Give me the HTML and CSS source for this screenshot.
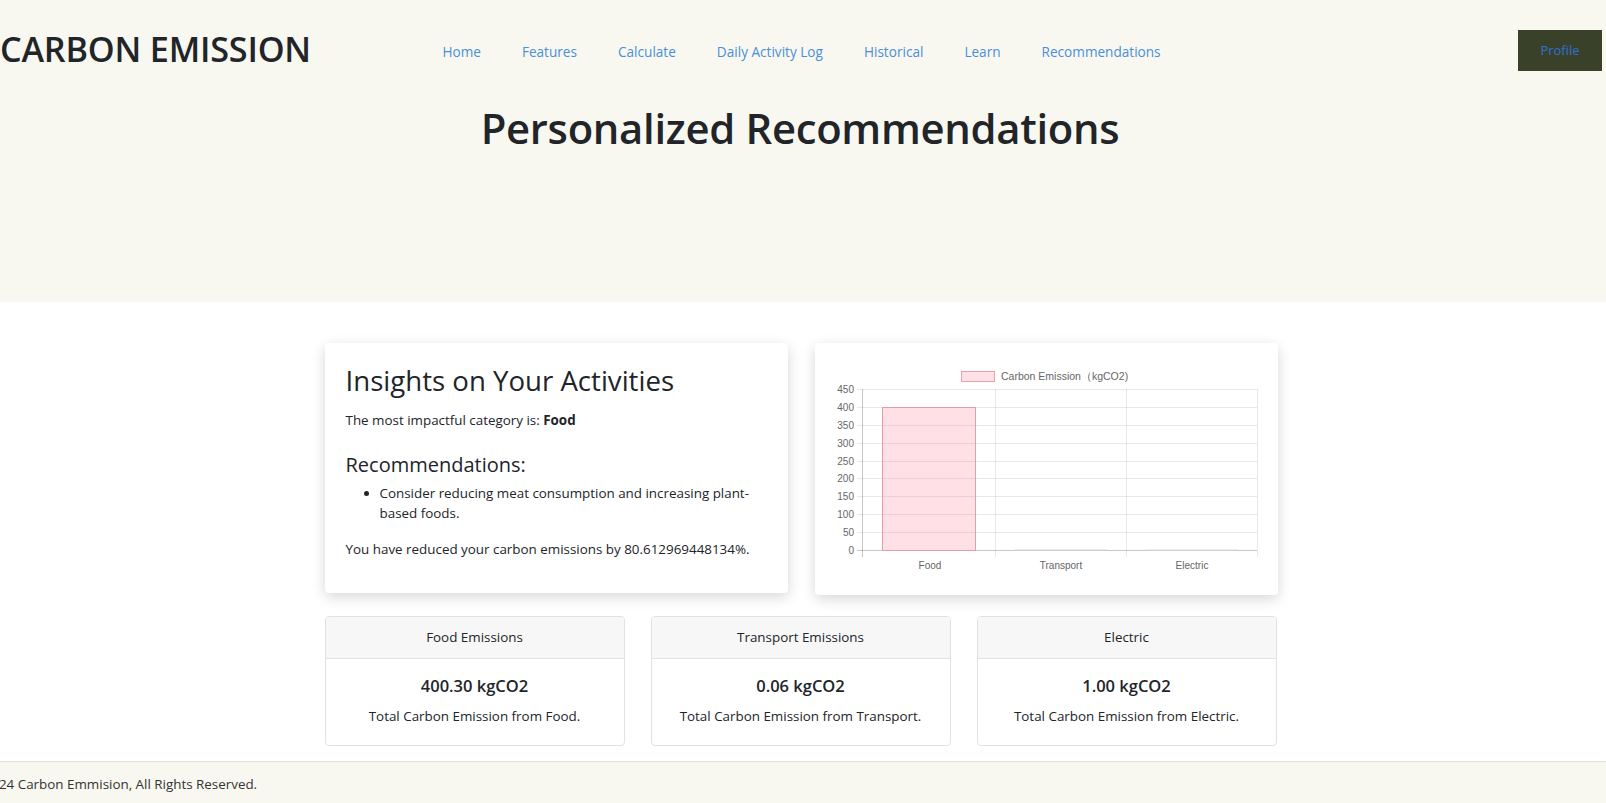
FILE: index.html
```html
<!DOCTYPE html>
<html lang="en">
<head>
    <meta charset="UTF-8">
    <meta name="viewport" content="width=device-width, initial-scale=1.0">
    <title>Recommendations</title>
    <link rel="stylesheet" href="styles.css">
</head>
<body>
    <!-- top bar + page title -->
    <header class="site-header">
        <nav class="navbar">
            <a class="brand" href="#">CARBON EMISSION</a>
            <ul class="nav-links">
                <li><a href="#">Home</a></li>
                <li><a href="#">Features</a></li>
                <li><a href="#">Calculate</a></li>
                <li><a href="#">Daily Activity Log</a></li>
                <li><a href="#">Historical</a></li>
                <li><a href="#">Learn</a></li>
                <li><a href="#">Recommendations</a></li>
            </ul>
            <a class="profile-btn" href="#">Profile</a>
        </nav>
        <div class="hero">
            <h1>Personalized Recommendations</h1>
        </div>
    </header>

    <main class="content">
        <div class="container">
            <div class="top-row">
                <div class="card insights">
                    <h3>Insights on Your Activities</h3>
                    <p>The most impactful category is: <strong>Food</strong></p>
                    <h4>Recommendations:</h4>
                    <ul>
                        <li>Consider reducing meat consumption and increasing plant-based foods.</li>
                    </ul>
                    <p>You have reduced your carbon emissions by 80.612969448134%.</p>
                </div>

                <div class="card chart-card">
                    <svg class="chart" width="463" height="252" viewBox="0 0 463 252">
                        <!-- legend -->
                        <rect x="146.5" y="28.5" width="33" height="10" fill="rgba(255,99,132,0.2)" stroke="#e6a3ab" stroke-width="1"/>
                        <text x="186" y="37" class="legend">Carbon Emission（kgCO2)</text>

                        <!-- horizontal grid -->
                        <g stroke="rgba(0,0,0,0.09)" stroke-width="1">
                            <line x1="42" y1="46.5" x2="442" y2="46.5"/>
                            <line x1="42" y1="64.5" x2="442" y2="64.5"/>
                            <line x1="42" y1="82.5" x2="442" y2="82.5"/>
                            <line x1="42" y1="100.5" x2="442" y2="100.5"/>
                            <line x1="42" y1="118.5" x2="442" y2="118.5"/>
                            <line x1="42" y1="135.5" x2="442" y2="135.5"/>
                            <line x1="42" y1="153.5" x2="442" y2="153.5"/>
                            <line x1="42" y1="171.5" x2="442" y2="171.5"/>
                            <line x1="42" y1="189.5" x2="442" y2="189.5"/>
                            <line x1="180.5" y1="46" x2="180.5" y2="214"/>
                            <line x1="311.5" y1="46" x2="311.5" y2="214"/>
                            <line x1="442.5" y1="46" x2="442.5" y2="214"/>
                        </g>
                        <g stroke="rgba(0,0,0,0.22)" stroke-width="1">
                            <line x1="47.5" y1="46" x2="47.5" y2="214"/>
                            <line x1="42" y1="207.5" x2="442" y2="207.5"/>
                        </g>

                        <!-- y labels -->
                        <g class="tick" text-anchor="end">
                            <text x="39" y="50">450</text>
                            <text x="39" y="68">400</text>
                            <text x="39" y="86">350</text>
                            <text x="39" y="104">300</text>
                            <text x="39" y="122">250</text>
                            <text x="39" y="139">200</text>
                            <text x="39" y="157">150</text>
                            <text x="39" y="175">100</text>
                            <text x="39" y="193">50</text>
                            <text x="39" y="211">0</text>
                        </g>

                        <!-- bars -->
                        <rect x="67.5" y="64.5" width="93" height="143" fill="rgba(255,99,132,0.2)" stroke="#dca0a6" stroke-width="1"/>
                        <line x1="199" y1="207" x2="292" y2="207" stroke="#cfd8dc" stroke-width="1"/>
                        <line x1="330" y1="207" x2="423" y2="207" stroke="#e0d8d8" stroke-width="1"/>

                        <!-- x labels -->
                        <g class="tick" text-anchor="middle">
                            <text x="115" y="226">Food</text>
                            <text x="246" y="226">Transport</text>
                            <text x="377" y="226">Electric</text>
                        </g>
                    </svg>
                </div>
            </div>

            <div class="stat-row">
                <div class="card stat">
                    <div class="stat-header">Food Emissions</div>
                    <div class="stat-body">
                        <h5>400.30 kgCO2</h5>
                        <p>Total Carbon Emission from Food.</p>
                    </div>
                </div>
                <div class="card stat">
                    <div class="stat-header">Transport Emissions</div>
                    <div class="stat-body">
                        <h5>0.06 kgCO2</h5>
                        <p>Total Carbon Emission from Transport.</p>
                    </div>
                </div>
                <div class="card stat">
                    <div class="stat-header">Electric</div>
                    <div class="stat-body">
                        <h5>1.00 kgCO2</h5>
                        <p>Total Carbon Emission from Electric.</p>
                    </div>
                </div>
            </div>
        </div>
    </main>

    <footer class="site-footer">
        <p>&copy; 2024 Carbon Emmision, All Rights Reserved.</p>
    </footer>
</body>
</html>
```

FILE: styles.css
```css
* {
    box-sizing: border-box;
}
body {
    margin: 0;
    font-family: 'Open Sans', 'Noto Sans', sans-serif;
    color: #212529;
    background: #fff;
    overflow: hidden;
}
a {
    text-decoration: none;
}

/* header */
.site-header {
    background-color: #f9f8f0;
    height: 302px;
}
.navbar {
    display: flex;
    align-items: center;
    height: 102px;
}
.brand {
    font-size: 34.2px;
    font-weight: 600;
    color: #212529;
    letter-spacing: -0.2px;
    width: 422px;
    margin-top: -5px;
}
.nav-links {
    display: flex;
    list-style: none;
    margin: 0;
    padding: 0;
    flex: 1;
}
.nav-links a {
    display: block;
    padding: 0 20.5px;
    font-size: 13.6px;
    color: #4a8fd9;
}
.profile-btn {
    background-color: #3a4129;
    color: #2f6fd6;
    font-size: 13px;
    width: 84px;
    height: 41px;
    line-height: 41px;
    text-align: center;
    margin-right: 4px;
    margin-top: -2px;
}
.hero {
    text-align: center;
    padding-right: 6px;
}
.hero h1 {
    margin: 0;
    font-size: 41.8px;
    font-weight: 600;
    letter-spacing: -0.3px;
    line-height: 1.25;
}

/* main */
.content {
    padding: 41px 0 15px;
}
.container {
    width: 953px;
    margin: 0 auto;
    position: relative;
    left: -2px;
}
.card {
    background: #fff;
    border-radius: 4px;
}
.top-row {
    display: flex;
    gap: 27px;
    align-items: flex-start;
}
.insights,
.chart-card {
    width: 463px;
    box-shadow: 0 4px 14px rgba(0, 0, 0, 0.16);
}
.insights {
    padding: 20px 21px 18px;
    font-size: 13.4px;
}
.insights h3 {
    margin: 0 0 13px;
    font-size: 27.6px;
    font-weight: 500;
    line-height: 1.25;
}
.insights p {
    margin: 0 0 15px;
    line-height: 21px;
}
.insights strong {
    font-weight: 700;
}
.insights h4 {
    margin: 22px 0 7px;
    font-size: 20px;
    font-weight: 500;
    line-height: 1.2;
}
.insights ul {
    margin: 0 0 16px;
    padding-left: 34px;
    line-height: 19.5px;
}
.chart-card {
    height: 252px;
}
.chart {
    display: block;
}
.chart text {
    font-family: 'Liberation Sans', Arial, sans-serif;
    fill: #666;
}
.chart .legend {
    font-size: 10.5px;
}
.chart .tick {
    font-size: 10px;
}

.stat-row {
    display: flex;
    gap: 26px;
    margin-top: 21px;
}
.stat {
    width: 300px;
    border: 1px solid #e2e2e2;
    text-align: center;
    overflow: hidden;
}
.stat-header {
    background-color: #f7f7f7;
    border-bottom: 1px solid #e2e2e2;
    height: 42px;
    line-height: 40px;
    font-size: 13.4px;
}
.stat-body {
    padding: 16px 10px 19px;
}
.stat-body h5 {
    margin: 0 0 9px;
    font-size: 16.5px;
    font-weight: 600;
    line-height: 22px;
}
.stat-body p {
    margin: 0;
    font-size: 13.4px;
    line-height: 20px;
}

/* footer */
.site-footer {
    background-color: #f9f8f0;
    border-top: 1px solid #e4e3da;
    height: 45px;
}
.site-footer p {
    margin: 0 0 0 -31px;
    line-height: 44px;
    font-size: 13.4px;
    color: #333;
}
```
